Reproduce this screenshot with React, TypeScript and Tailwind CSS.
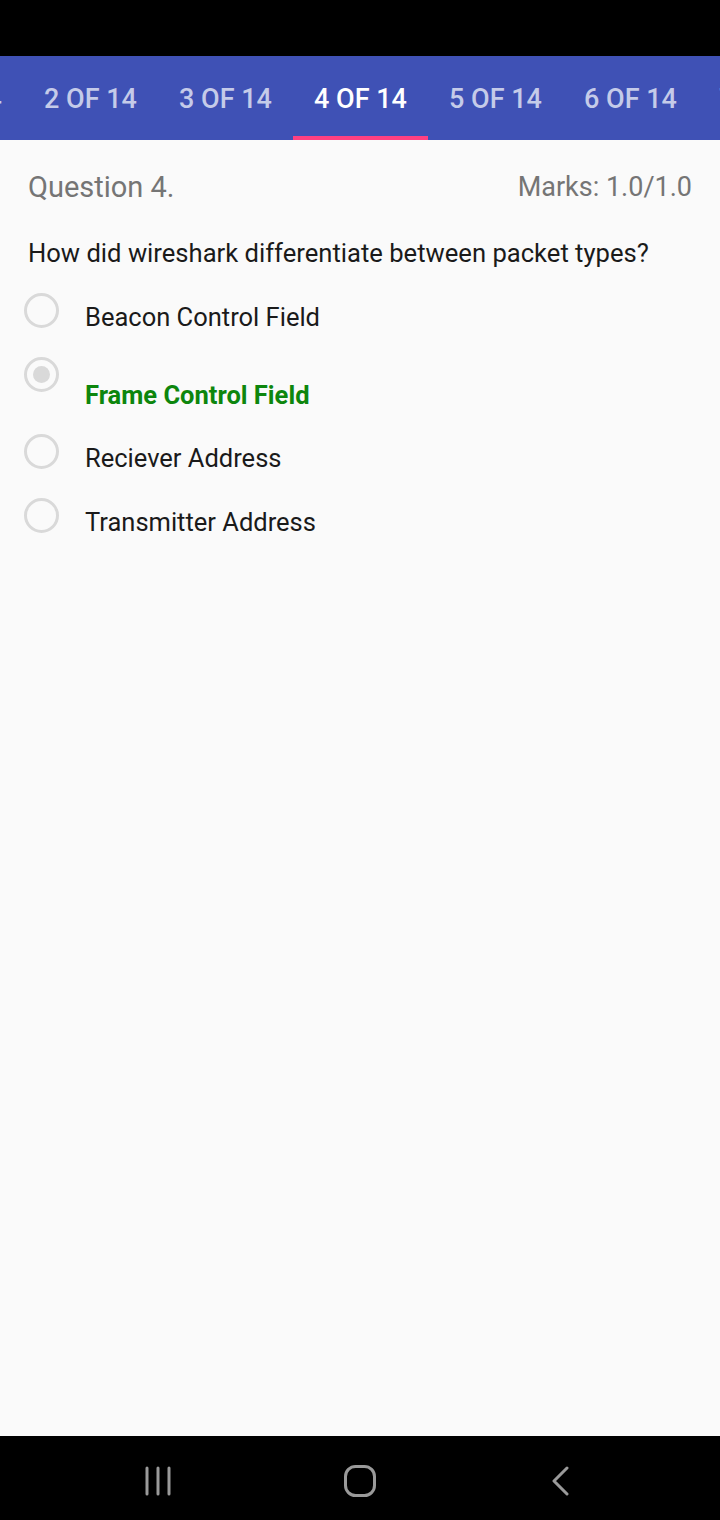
import React from 'react';

const tabs = ['1 OF 14', '2 OF 14', '3 OF 14', '4 OF 14', '5 OF 14', '6 OF 14', '7 OF 14'];

const options = [
  { label: 'Beacon Control Field', checked: false, correct: false },
  { label: 'Frame Control Field', checked: true, correct: true },
  { label: 'Reciever Address', checked: false, correct: false },
  { label: 'Transmitter Address', checked: false, correct: false },
];

function Radio({ checked }: { checked: boolean }) {
  return (
    <div className="w-[35px] h-[35px] shrink-0 rounded-full border-[3px] border-[#d9d9d9] flex items-center justify-center">
      {checked && <div className="w-[17px] h-[17px] rounded-full bg-[#d9d9d9]" />}
    </div>
  );
}

export default function App() {
  return (
    <div className="w-[720px] h-[1520px] flex flex-col bg-[#fafafa] font-['Roboto',sans-serif] overflow-hidden">
      {/* status bar */}
      <div className="h-[56px] bg-black shrink-0" />

      {/* question tabs */}
      <div className="h-[84px] bg-[#3f51b5] shrink-0 overflow-hidden">
        <div className="flex h-full ml-[-112px]">
          {tabs.map((t, i) => (
            <div key={t} className="w-[135px] shrink-0 h-full flex flex-col pt-[6px]">
              <div
                className={`flex-1 flex items-center justify-center text-[27px] font-medium ${
                  i === 3 ? 'text-white' : 'text-[#c5cbe9]'
                }`}
              >
                {t}
              </div>
              <div className={`h-[4px] ${i === 3 ? 'bg-[#ff4081]' : ''}`} />
            </div>
          ))}
        </div>
      </div>

      {/* content */}
      <div className="flex-1 px-[28px] pt-[29px]">
        <div className="flex justify-between items-center leading-[36px] text-[#757575]">
          <span className="text-[29px]">Question 4.</span>
          <span className="text-[27px]">Marks: 1.0/1.0</span>
        </div>
        <p className="mt-[31px] text-[25.6px] leading-[34px] text-[#1a1a1a]">
          How did wireshark differentiate between packet types?
        </p>
        <div className="mt-[23px] ml-[-4px] flex flex-col gap-[22.5px]">
          {options.map(o => (
            <div key={o.label} className="flex items-start">
              <Radio checked={o.checked} />
              <span
                className={`ml-[26px] text-[25.5px] leading-[34px] ${
                  o.correct ? 'mt-[21px] font-bold text-[#0d860d]' : 'mt-[7px] text-[#1a1a1a]'
                }`}
              >
                {o.label}
              </span>
            </div>
          ))}
        </div>
      </div>

      {/* navigation bar */}
      <div className="h-[84px] bg-black shrink-0 flex justify-center items-center pt-[6px]">
        <div className="w-[201px] flex justify-center">
          <svg width="30" height="30" viewBox="0 0 30 30" fill="none" stroke="#9a9a9a" strokeWidth="3" strokeLinecap="round">
            <line x1="3" y1="2" x2="3" y2="28" />
            <line x1="14" y1="2" x2="14" y2="28" />
            <line x1="25" y1="2" x2="25" y2="28" />
          </svg>
        </div>
        <div className="w-[201px] flex justify-center">
          <svg width="32" height="32" viewBox="0 0 32 32" fill="none" stroke="#9a9a9a" strokeWidth="3">
            <rect x="1.5" y="1.5" width="29" height="29" rx="10" />
          </svg>
        </div>
        <div className="w-[201px] flex justify-center">
          <svg width="20" height="30" viewBox="0 0 20 30" fill="none" stroke="#9a9a9a" strokeWidth="3" strokeLinecap="round" strokeLinejoin="round">
            <polyline points="16,2 3,15 16,28" />
          </svg>
        </div>
      </div>
    </div>
  );
}
